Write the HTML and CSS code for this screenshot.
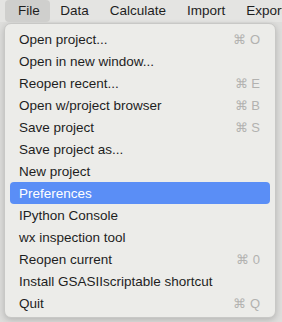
FILE: index.html
```html
<!DOCTYPE html>
<html>
<head>
<meta charset="utf-8">
<link rel="stylesheet" href="styles.css">
</head>
<body>
<div class="menubar">
  <span class="mb-item active">File</span>
  <span class="mb-item">Data</span>
  <span class="mb-item">Calculate</span>
  <span class="mb-item">Import</span>
  <span class="mb-item">Export</span>
</div>
<div class="menu">
  <div class="row"><span>Open project...</span><span class="sc">⌘ O</span></div>
  <div class="row"><span>Open in new window...</span></div>
  <div class="row"><span>Reopen recent...</span><span class="sc">⌘ E</span></div>
  <div class="row"><span>Open w/project browser</span><span class="sc">⌘ B</span></div>
  <div class="row"><span>Save project</span><span class="sc">⌘ S</span></div>
  <div class="row"><span>Save project as...</span></div>
  <div class="row"><span>New project</span></div>
  <div class="row selected"><span>Preferences</span></div>
  <div class="row"><span>IPython Console</span></div>
  <div class="row"><span>wx inspection tool</span></div>
  <div class="row"><span>Reopen current</span><span class="sc">⌘ 0</span></div>
  <div class="row"><span>Install GSASIIscriptable shortcut</span></div>
  <div class="row"><span>Quit</span><span class="sc">⌘ Q</span></div>
</div>
</body>
</html>
```
FILE: styles.css
```css
html, body {
  margin: 0;
  padding: 0;
}
body {
  width: 282px;
  height: 322px;
  overflow: hidden;
  background: #dddddb;
  font-family: "Liberation Sans", Arial, sans-serif;
  font-size: 13.5px;
  color: #1e1e1e;
}
.menubar {
  height: 22px;
  background: #e4e4e2;
  display: flex;
  align-items: center;
  white-space: nowrap;
  padding-left: 5px;
}
.mb-item {
  height: 22px;
  line-height: 22px;
  padding: 0 10.5px;
  border-radius: 4px;
}
.mb-item.active {
  background: #cfcfcd;
  padding: 0 10px 0 13px;
  margin-right: 0;
}
.menu {
  margin: 1px 0 0 4px;
  width: 272px;
  height: 295px;
  box-sizing: border-box;
  background: #ecece9;
  border: 1px solid #c8c8c6;
  border-radius: 7px;
  box-shadow: 0 2px 6px rgba(0,0,0,0.18);
  padding: 4px 5px;
}
.row {
  height: 22px;
  display: flex;
  align-items: center;
  justify-content: space-between;
  padding: 0 10px 0 9px;
  border-radius: 4px;
  white-space: nowrap;
}
.row.selected {
  background: #5a8ef6;
  color: #ffffff;
}
.sc {
  color: #b2b2b0;
  white-space: nowrap;
  font-size: 13px;
}
```
